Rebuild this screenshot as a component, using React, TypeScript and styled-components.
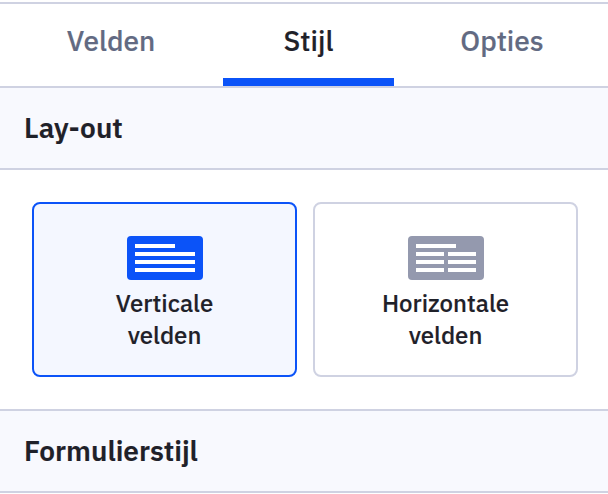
import React from "react";
import styled, { createGlobalStyle } from "styled-components";

const GlobalStyle = createGlobalStyle`
  * { box-sizing: border-box; }
  body {
    margin: 0;
    background: #fff;
    color: #1f2129;
    font-family: "IBM Plex Sans", Roboto, sans-serif;
    overflow: hidden;
    -webkit-text-stroke: 0.15px currentColor;
  }
  button { font: inherit; color: inherit; }
`;

const Panel = styled.main`
  height: 494px;
  padding-top: 2px;
  overflow: hidden;
`;

const Tabs = styled.nav`
  display: grid;
  grid-template-columns: 212px 171px 204px;
  column-gap: 6px;
  padding-left: 5px;
  height: 86px;
  border-top: 2px solid #cfd2e2;
  border-bottom: 2px solid #cfd2e2;
`;

const Tab = styled.button<{ $active?: boolean }>`
  padding: 0;
  border: 0;
  border-bottom: 8px solid ${(p) => (p.$active ? "#0b53f8" : "transparent")};
  background: none;
  color: ${(p) => (p.$active ? "#1f2129" : "#626a82")};
  font-size: 28px;
  font-weight: 500;
  line-height: 74px;
  white-space: nowrap;
`;

const SectionHeading = styled.h2<{ $divided?: boolean }>`
  margin: 0;
  padding-left: 24px;
  height: ${(p) => (p.$divided ? 84 : 82)}px;
  border-top: ${(p) => (p.$divided ? "2px solid #cfd2e2" : "0")};
  border-bottom: 2px solid #cfd2e2;
  background: #f8f9fe;
  font-size: 28px;
  font-weight: 600;
  line-height: 80px;
`;

const Choices = styled.div`
  display: grid;
  grid-template-columns: 265px 265px;
  gap: 16px;
  padding: 32px;
  height: 239px;
`;

const Choice = styled.button<{ $selected?: boolean }>`
  display: flex;
  flex-direction: column;
  align-items: center;
  gap: 7px;
  padding: 32px 0 0;
  border: 2px solid ${(p) => (p.$selected ? "#0b53f8" : "#cfd2e2")};
  border-radius: 8px;
  background: ${(p) => (p.$selected ? "#f4f7ff" : "#fff")};
  color: #1f2129;
  font-size: 24px;
  font-weight: 500;
  line-height: 32px;
`;

const Caption = styled.span`
  width: 160px;
  text-align: center;
`;

const FormIcon = ({ color, split }: { color: string; split?: boolean }) => (
  <svg width="76" height="44" viewBox="0 0 76 44" aria-hidden="true">
    <rect width="76" height="44" rx="4" fill={color} />
    <path fill="#fff" d="M8 8h40v4H8zM8 16h60v4H8zM8 24h60v4H8zM8 32h60v4H8z" />
    {split && <path fill={color} d="M36 16h4v20h-4z" />}
  </svg>
);

export default function App() {
  return (
    <>
      <GlobalStyle />
      <Panel>
        <Tabs>
          <Tab>Velden</Tab>
          <Tab $active>Stijl</Tab>
          <Tab>Opties</Tab>
        </Tabs>
        <SectionHeading>Lay-out</SectionHeading>
        <Choices>
          <Choice $selected>
            <FormIcon color="#0b53f8" />
            <Caption>Verticale velden</Caption>
          </Choice>
          <Choice>
            <FormIcon color="#9499ae" split />
            <Caption>Horizontale velden</Caption>
          </Choice>
        </Choices>
        <SectionHeading $divided>Formulierstijl</SectionHeading>
      </Panel>
    </>
  );
}
